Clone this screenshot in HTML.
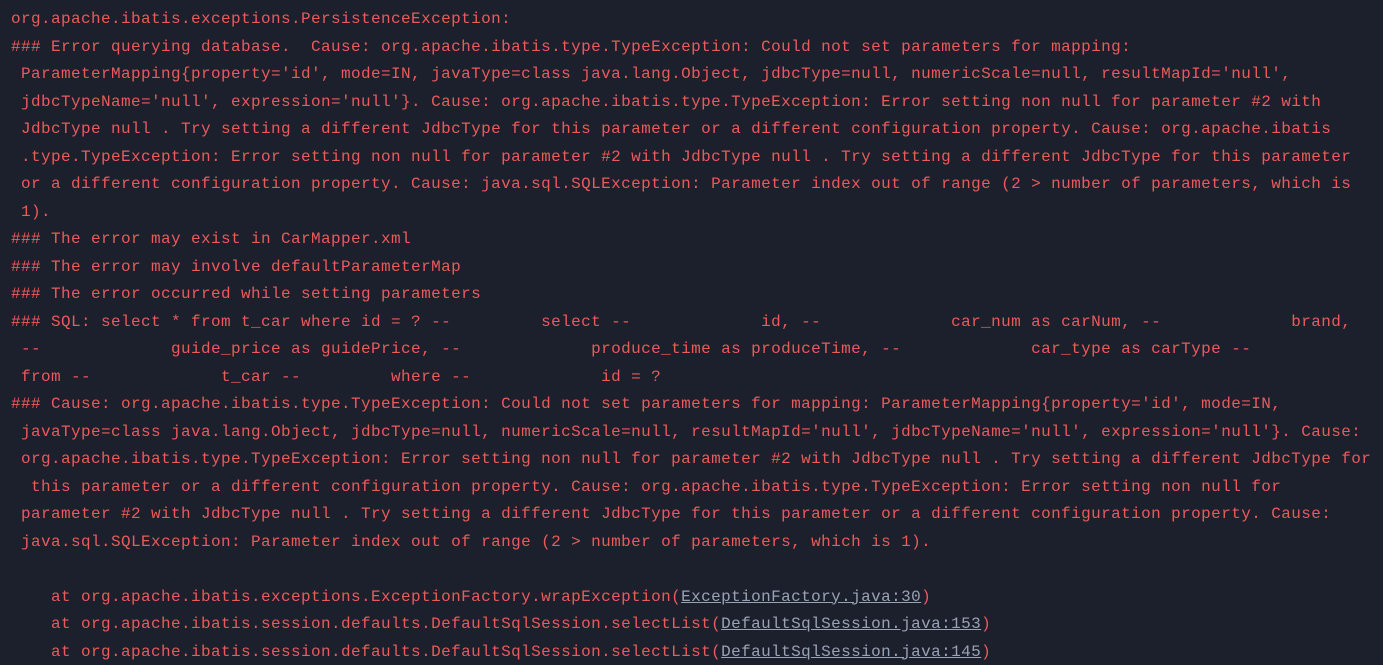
<!DOCTYPE html>
<html><head><meta charset="utf-8"><style>
html,body{margin:0;padding:0;background:#1c1f2c;width:1383px;height:665px;overflow:hidden}
pre{margin:0;padding:6px 0 0 11px;font-family:"Liberation Mono",monospace;font-size:16px;letter-spacing:0.4px;line-height:27.5px;color:#ea5b5b;white-space:pre}
a{color:#9aa3b5;text-decoration:underline}
</style></head><body><pre>org.apache.ibatis.exceptions.PersistenceException: 
### Error querying database.  Cause: org.apache.ibatis.type.TypeException: Could not set parameters for mapping:
 ParameterMapping{property='id', mode=IN, javaType=class java.lang.Object, jdbcType=null, numericScale=null, resultMapId='null',
 jdbcTypeName='null', expression='null'}. Cause: org.apache.ibatis.type.TypeException: Error setting non null for parameter #2 with
 JdbcType null . Try setting a different JdbcType for this parameter or a different configuration property. Cause: org.apache.ibatis
 .type.TypeException: Error setting non null for parameter #2 with JdbcType null . Try setting a different JdbcType for this parameter
 or a different configuration property. Cause: java.sql.SQLException: Parameter index out of range (2 &gt; number of parameters, which is
 1).
### The error may exist in CarMapper.xml
### The error may involve defaultParameterMap
### The error occurred while setting parameters
### SQL: select * from t_car where id = ? --         select --             id, --             car_num as carNum, --             brand,
 --             guide_price as guidePrice, --             produce_time as produceTime, --             car_type as carType --
 from --             t_car --         where --             id = ?
### Cause: org.apache.ibatis.type.TypeException: Could not set parameters for mapping: ParameterMapping{property='id', mode=IN,
 javaType=class java.lang.Object, jdbcType=null, numericScale=null, resultMapId='null', jdbcTypeName='null', expression='null'}. Cause:
 org.apache.ibatis.type.TypeException: Error setting non null for parameter #2 with JdbcType null . Try setting a different JdbcType for
  this parameter or a different configuration property. Cause: org.apache.ibatis.type.TypeException: Error setting non null for
 parameter #2 with JdbcType null . Try setting a different JdbcType for this parameter or a different configuration property. Cause:
 java.sql.SQLException: Parameter index out of range (2 &gt; number of parameters, which is 1).

    at org.apache.ibatis.exceptions.ExceptionFactory.wrapException(<a>ExceptionFactory.java:30</a>)
    at org.apache.ibatis.session.defaults.DefaultSqlSession.selectList(<a>DefaultSqlSession.java:153</a>)
    at org.apache.ibatis.session.defaults.DefaultSqlSession.selectList(<a>DefaultSqlSession.java:145</a>)
</pre></body></html>
